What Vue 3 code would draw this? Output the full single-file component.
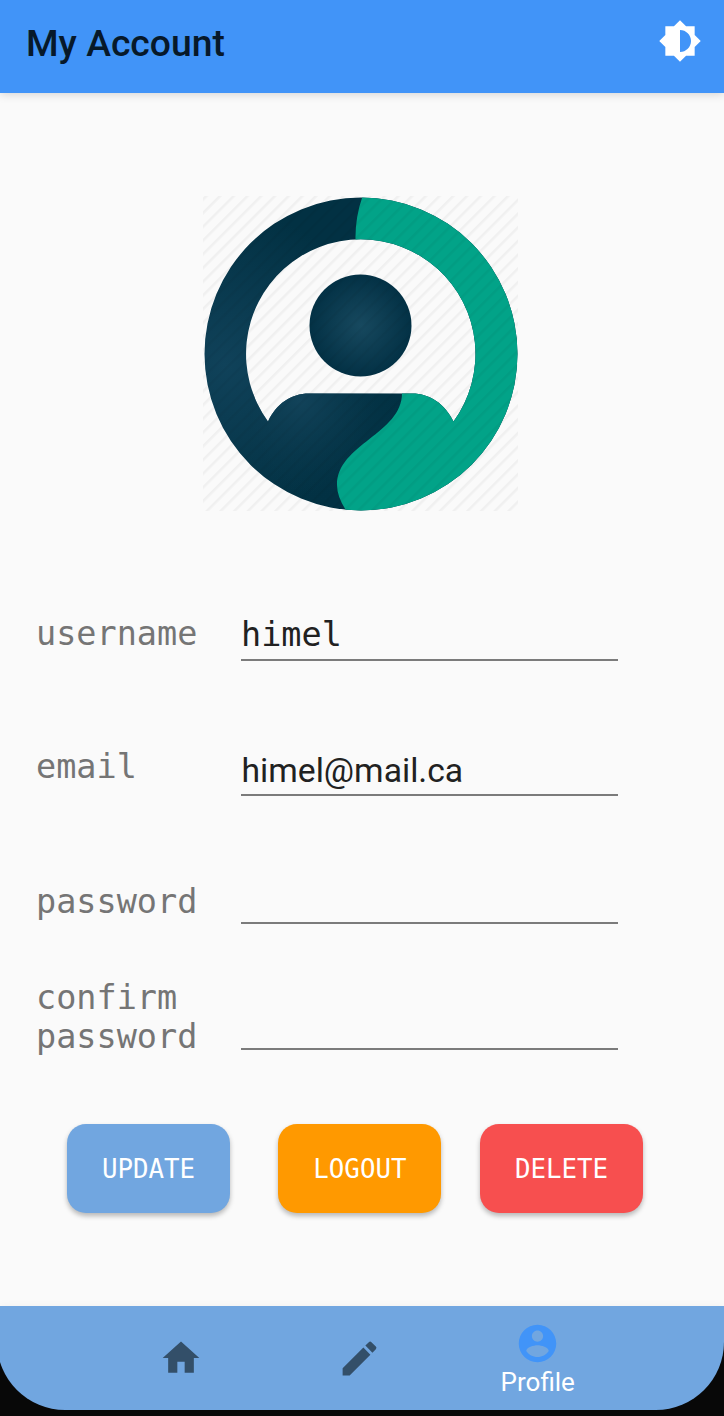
<script setup>
const rows = [
  { key: 'username', label: 'username', value: 'himel', type: 'mono' },
  { key: 'email', label: 'email', value: 'himel@mail.ca', type: 'sans' },
  { key: 'password', label: 'password', value: '', type: 'mono' },
  { key: 'confirm', label: 'confirm password', value: '', type: 'mono' },
]
const actions = [
  { key: 'update', label: 'UPDATE' },
  { key: 'logout', label: 'LOGOUT' },
  { key: 'delete', label: 'DELETE' },
]
</script>

<template>
  <div class="screen">
    <header class="bar">
      <h1>My Account</h1>
      <svg class="theme" viewBox="0 0 24 24"><path fill="#fff" d="M20 15.31 23.31 12 20 8.69V4h-4.69L12 .69 8.69 4H4v4.69L.69 12 4 15.31V20h4.69L12 23.31 15.31 20H20zM12 18V6c3.31 0 6 2.69 6 6s-2.69 6-6 6z" /></svg>
    </header>

    <main>
      <svg class="avatar" viewBox="203 195 316 316">
        <defs>
          <pattern id="stripes" width="9.7" height="9.7" patternUnits="userSpaceOnUse" patternTransform="rotate(45)">
            <rect x="2" width="2.4" height="9.7" fill="#000" fill-opacity=".038" />
          </pattern>
          <radialGradient id="head"><stop offset="0" stop-color="#17495f" /><stop offset="1" stop-color="#033145" /></radialGradient>
          <radialGradient id="ring" gradientUnits="userSpaceOnUse" cx="225" cy="365" r="155"><stop offset="0" stop-color="#10425a" /><stop offset="1" stop-color="#023143" /></radialGradient>
          <radialGradient id="torso" gradientUnits="userSpaceOnUse" cx="300" cy="400" r="108"><stop offset="0" stop-color="#12435a" /><stop offset="1" stop-color="#023143" stop-opacity="0" /></radialGradient>
          <clipPath id="figure">
            <path clip-rule="evenodd" d="M361 197.500A156.500 156.500 0 1 1 361 510.500A156.500 156.500 0 1 1 361 197.500ZM268 421.500A114.700 114.700 0 1 1 453.500 421.500C445 404 430 393.500 412 393.500H309C291 393.500 276 404 268 421.500Z" />
          </clipPath>
        </defs>
        <g clip-path="url(#figure)">
          <path fill="url(#ring)" d="M203 195h316v316H203z" />
          <path fill="url(#torso)" d="M250 390h170v121H250z" />
          <path fill="#02a388" d="M363 195Q355 217 355.500 240L402 393C402 434 337 444 337 485Q337 497 347 512H520V195Z" />
        </g>
        <circle cx="360.500" cy="325.500" r="51" fill="url(#head)" />
        <path fill="url(#stripes)" d="M203 196h315v315H203z" />
      </svg>

      <form class="form" @submit.prevent>
        <div v-for="r in rows" :key="r.key" class="row" :class="r.key">
          <label>{{ r.label }}</label>
          <div class="field" :class="r.type">{{ r.value }}</div>
        </div>
        <div class="actions">
          <button v-for="a in actions" :key="a.key" type="button" :class="a.key"><span>{{ a.label }}</span></button>
        </div>
      </form>
    </main>

    <footer>
      <nav>
        <a class="tab"><svg class="home" viewBox="0 0 24 24"><path fill="#334f69" d="M10 20v-6h4v6h5v-8h3L12 3 2 12h3v8z" /></svg></a>
        <a class="tab"><svg class="edit" viewBox="0 0 24 24"><path fill="#334f69" d="M3 17.250V21h3.750L17.810 9.940l-3.750-3.750L3 17.250zM20.710 7.040a1 1 0 0 0 0-1.410l-2.340-2.340a1 1 0 0 0-1.410 0l-1.830 1.830 3.750 3.750 1.830-1.830z" /></svg></a>
        <a class="tab active">
          <svg viewBox="0 0 24 24"><path fill="#4194f8" d="M12 2C6.480 2 2 6.480 2 12s4.480 10 10 10 10-4.480 10-10S17.520 2 12 2zm0 3c1.660 0 3 1.340 3 3s-1.340 3-3 3-3-1.340-3-3 1.340-3 3-3zm0 14.200c-2.500 0-4.710-1.280-6-3.220.030-1.990 4-3.080 6-3.080 1.990 0 5.970 1.090 6 3.080-1.290 1.940-3.500 3.220-6 3.220z" /></svg>
          <span>Profile</span>
        </a>
      </nav>
    </footer>
  </div>
</template>

<style>
body { background: #fafafa; }
</style>

<style scoped>
* { box-sizing: border-box; }
.screen { width: 724px; height: 1416px; display: flex; flex-direction: column; overflow: hidden; background: #fafafa; font-family: Roboto, sans-serif; }
.bar { height: 93px; flex: none; display: flex; align-items: flex-start; justify-content: space-between; padding: 19px 22.500px 0 26px; background: #4194f8; box-shadow: 0 1px 9px rgba(0, 0, 0, .17); }
h1 { margin: 3px 0 0; font-size: 37.300px; line-height: 43px; font-weight: 500; color: #07192a; white-space: nowrap; }
.theme { width: 44px; height: 44px; }
main { flex: 1; display: flex; flex-direction: column; }
.avatar { width: 316px; height: 316px; margin: 102px 0 0 203px; flex: none; }
.form { margin-top: 106px; }
.row { display: grid; grid-template-columns: 205px 376.500px; padding-left: 36px; align-items: start; }
.username { height: 134px; }
.email { height: 135px; }
.password { height: 95px; }
.confirm { height: 143px; }
label { margin-top: -4px; font: 33.500px/39px "DejaVu Sans Mono", monospace; color: #757575; padding-right: 30px; }
.username label, .confirm label { margin-top: -3px; }
.field { border-bottom: 2px solid #7b7b7b; color: #212121; white-space: nowrap; }
.mono { font: 33.500px/35px "DejaVu Sans Mono", monospace; }
.sans { padding-left: .500px; font: 33.700px/39px Roboto, sans-serif; }
.username .field { height: 44px; }
.email .field { height: 45px; }
.password .field { height: 38px; }
.confirm .field { height: 69px; }
.actions { display: flex; padding-left: 67px; }
button { width: 163px; height: 89px; padding: 0; border: 0; border-radius: 19px; color: #fff; font: 25.800px/30px "DejaVu Sans Mono", monospace; box-shadow: 0 3px 5px rgba(0, 0, 0, .27); }
.update { background: #71a6e0; margin-right: 48.400px; }
.logout { background: #ff9900; margin-right: 38.600px; }
.delete { background: #f74f4f; }
button span { display: inline-block; }
footer { height: 110px; flex: none; background: #080808; background-image: linear-gradient(#71a6e0 25px, transparent 25px); box-shadow: 0 -1px 8px rgba(0, 0, 0, .04); }
nav { width: 727px; margin-left: -3px; height: 104px; padding-left: 94.500px; display: flex; background: #71a6e0; border-radius: 0 0 68px 68px; }
.tab { width: 178.500px; display: flex; flex-direction: column; align-items: center; padding-top: 30px; }
.tab svg { width: 45px; height: 45px; display: block; }
.tab .home { width: 44px; height: 44px; }
.active { padding-top: 14.500px; }
.active span { margin-top: 1px; font-size: 26px; line-height: 30px; color: #fff; }
</style>
